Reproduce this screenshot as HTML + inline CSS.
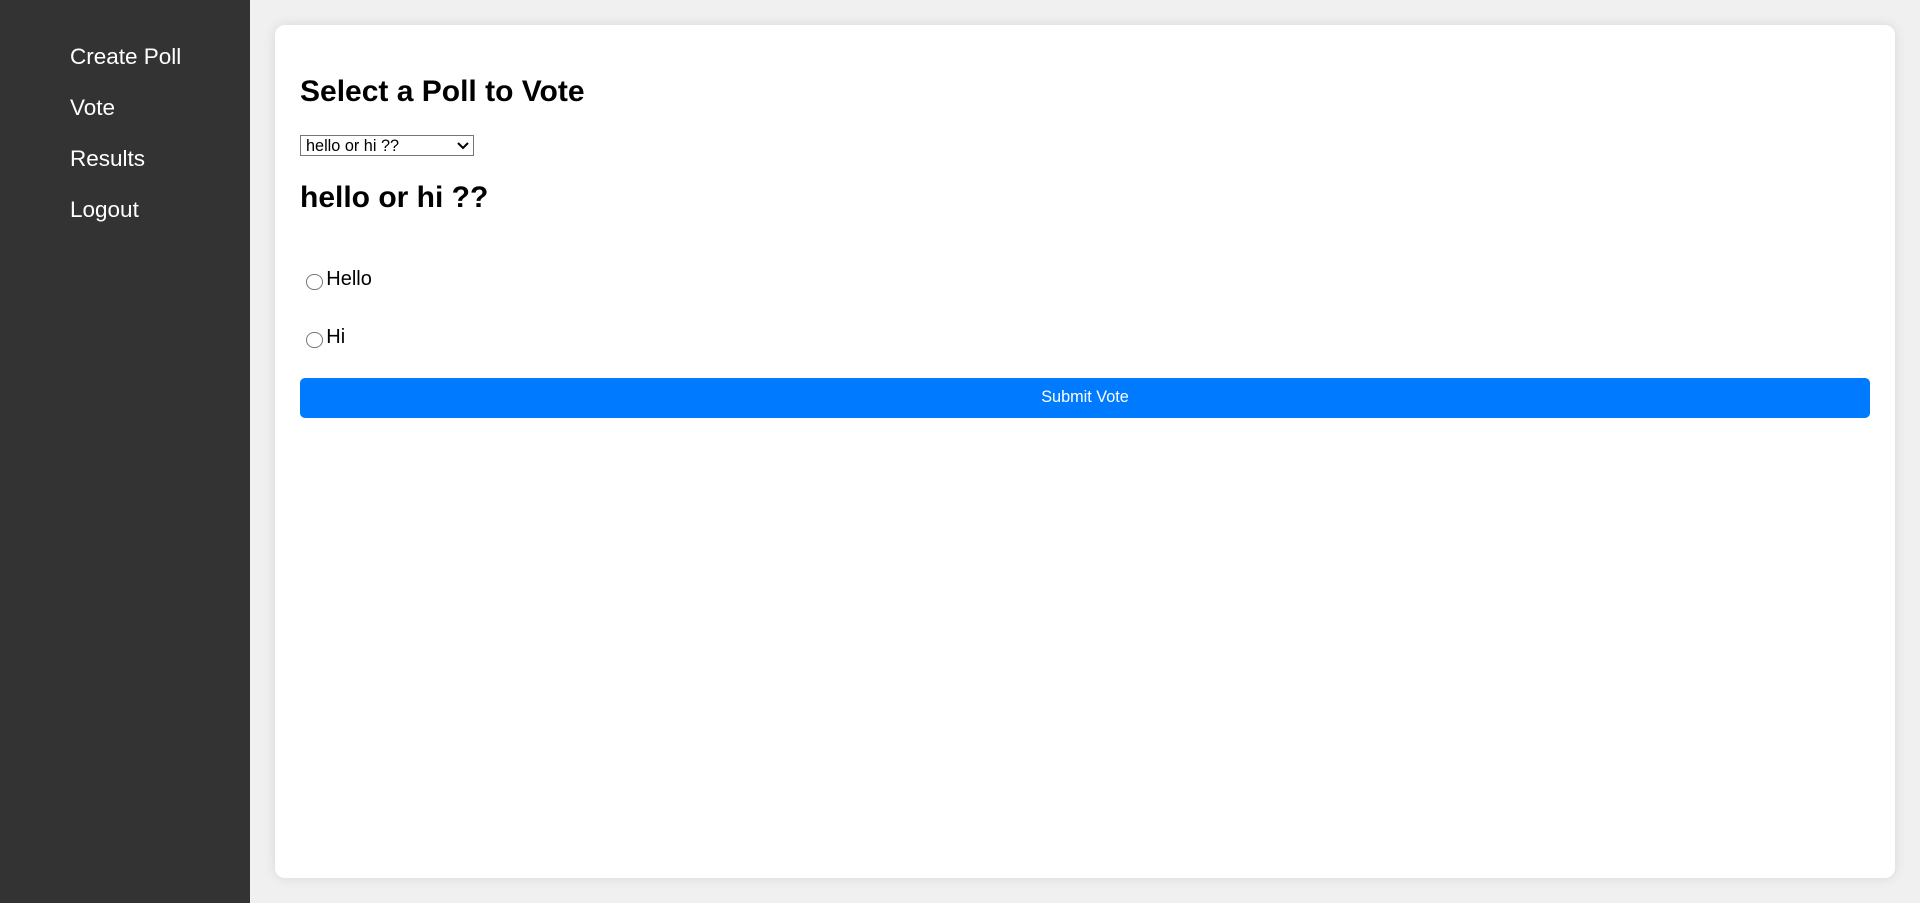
<!DOCTYPE html>
<html><head><meta charset="utf-8"><style>
html{zoom:1.25}
*{box-sizing:border-box}
body{margin:0;font-family:"Liberation Sans",Arial,sans-serif;background:#f0f0f0;height:722px;overflow:hidden;display:flex}
.side{width:200px;height:722.4px;background:#333;padding:25px 0 0 56px}
.side a{display:block;color:#fff;text-decoration:none;font-size:18px;height:40.8px;line-height:40.8px;margin:0}
.main{flex:1;padding:20px}
.card{background:#fff;border-radius:8px;height:682px;padding:20px;box-shadow:0 0 10px rgba(0,0,0,.1)}
h2{font-size:24px;margin:20px 0;line-height:27.6px}
select{font-family:"Liberation Sans",Arial,sans-serif;font-size:13px;width:139px;height:17px;border:1px solid #767676;border-radius:0;background:#fff;padding:0;margin:0;display:block}
.opt{height:46.5px;font-size:16px;display:flex;align-items:center}
.opt span.r{width:13px;height:13px;border:1px solid #767676;border-radius:50%;margin:4px 3px 0 5px;display:inline-block}
button{display:block;width:100%;height:32px;margin-top:9px;background:#007bff;color:#fff;border:0;border-radius:4px;font-family:"Liberation Sans",Arial,sans-serif;font-size:13px}
</style></head><body>
<div class="side"><a>Create Poll</a><a>Vote</a><a>Results</a><a>Logout</a></div>
<div class="main"><div class="card">
<h2>Select a Poll to Vote</h2>
<select><option>hello or hi ??</option></select>
<h2>hello or hi ??</h2>
<div style="height:8px"></div>
<div class="opt"><span class="r"></span>Hello</div>
<div class="opt"><span class="r"></span>Hi</div>
<button>Submit Vote</button>
</div></div>
</body></html>
